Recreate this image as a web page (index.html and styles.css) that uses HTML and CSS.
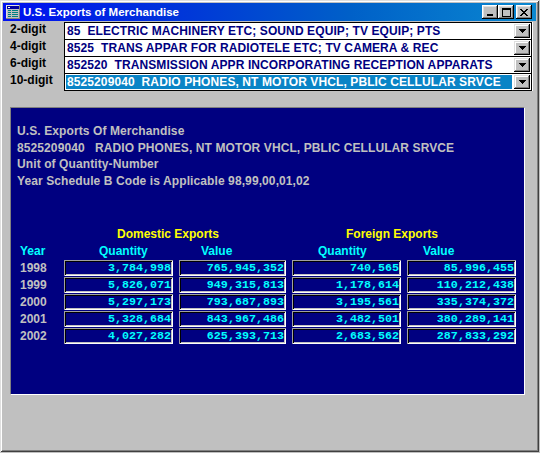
FILE: index.html
```html
<!DOCTYPE html>
<html>
<head>
<meta charset="utf-8">
<title>U.S. Exports of Merchandise</title>
<link rel="stylesheet" href="styles.css">
</head>
<body>
<div class="window">
  <div class="titlebar">
    <svg class="app-icon" viewBox="0 0 16 16" shape-rendering="crispEdges">
      <rect x="1" y="1" width="14" height="14" fill="#808080"/>
      <rect x="1" y="1" width="13" height="13" fill="#dfdfdf"/>
      <rect x="2" y="2" width="12" height="12" fill="#c0c0c0"/>
      <rect x="2" y="2" width="12" height="3" fill="#0000a0"/>
      <rect x="3" y="3" width="2" height="1" fill="#ffffff"/>
      <rect x="3" y="6" width="3" height="1" fill="#008080"/>
      <rect x="7" y="6" width="6" height="1" fill="#008080"/>
      <rect x="3" y="8" width="3" height="1" fill="#008080"/>
      <rect x="7" y="8" width="6" height="1" fill="#008080"/>
      <rect x="3" y="10" width="3" height="1" fill="#008080"/>
      <rect x="7" y="10" width="6" height="1" fill="#008080"/>
      <rect x="3" y="12" width="3" height="1" fill="#008080"/>
      <rect x="7" y="12" width="6" height="1" fill="#008080"/>
    </svg>
    <span class="title">U.S. Exports of Merchandise</span>
    <div class="controls">
      <span class="ctl">
        <svg width="8" height="7" shape-rendering="crispEdges"><rect x="1" y="5" width="6" height="2" fill="#000"/></svg>
      </span>
      <span class="ctl">
        <svg width="9" height="9" shape-rendering="crispEdges" fill="#000">
          <rect x="0" y="0" width="9" height="2"/><rect x="0" y="0" width="1" height="9"/>
          <rect x="8" y="0" width="1" height="9"/><rect x="0" y="8" width="9" height="1"/>
        </svg>
      </span>
      <span class="ctl ctl-close">
        <svg width="8" height="7" shape-rendering="crispEdges" fill="#000">
          <rect x="0" y="0" width="2" height="1"/><rect x="6" y="0" width="2" height="1"/>
          <rect x="1" y="1" width="2" height="1"/><rect x="5" y="1" width="2" height="1"/>
          <rect x="2" y="2" width="4" height="1"/>
          <rect x="3" y="3" width="2" height="1"/>
          <rect x="2" y="4" width="4" height="1"/>
          <rect x="1" y="5" width="2" height="1"/><rect x="5" y="5" width="2" height="1"/>
          <rect x="0" y="6" width="2" height="1"/><rect x="6" y="6" width="2" height="1"/>
        </svg>
      </span>
    </div>
  </div>

  <div class="selectors">
    <div class="sel-row">
      <span class="sel-label">2-digit</span>
      <div class="combo"><span class="combo-text">85  ELECTRIC MACHINERY ETC; SOUND EQUIP; TV EQUIP; PTS</span><span class="combo-btn"><svg width="7" height="4" shape-rendering="crispEdges" fill="#000"><rect x="0" y="0" width="7" height="1"/><rect x="1" y="1" width="5" height="1"/><rect x="2" y="2" width="3" height="1"/><rect x="3" y="3" width="1" height="1"/></svg></span></div>
    </div>
    <div class="sel-row">
      <span class="sel-label">4-digit</span>
      <div class="combo"><span class="combo-text">8525  TRANS APPAR FOR RADIOTELE ETC; TV CAMERA &amp; REC</span><span class="combo-btn"><svg width="7" height="4" shape-rendering="crispEdges" fill="#000"><rect x="0" y="0" width="7" height="1"/><rect x="1" y="1" width="5" height="1"/><rect x="2" y="2" width="3" height="1"/><rect x="3" y="3" width="1" height="1"/></svg></span></div>
    </div>
    <div class="sel-row">
      <span class="sel-label">6-digit</span>
      <div class="combo"><span class="combo-text">852520  TRANSMISSION APPR INCORPORATING RECEPTION APPARATS</span><span class="combo-btn"><svg width="7" height="4" shape-rendering="crispEdges" fill="#000"><rect x="0" y="0" width="7" height="1"/><rect x="1" y="1" width="5" height="1"/><rect x="2" y="2" width="3" height="1"/><rect x="3" y="3" width="1" height="1"/></svg></span></div>
    </div>
    <div class="sel-row">
      <span class="sel-label">10-digit</span>
      <div class="combo"><span class="combo-text selected">8525209040  RADIO PHONES, NT MOTOR VHCL, PBLIC CELLULAR SRVCE</span><span class="combo-btn"><svg width="7" height="4" shape-rendering="crispEdges" fill="#000"><rect x="0" y="0" width="7" height="1"/><rect x="1" y="1" width="5" height="1"/><rect x="2" y="2" width="3" height="1"/><rect x="3" y="3" width="1" height="1"/></svg></span></div>
    </div>
  </div>

  <div class="panel">
    <div class="info">
      <div class="info-line">U.S. Exports Of Merchandise</div>
      <div class="info-line">8525209040   RADIO PHONES, NT MOTOR VHCL, PBLIC CELLULAR SRVCE</div>
      <div class="info-line">Unit of Quantity-Number</div>
      <div class="info-line">Year Schedule B Code is Applicable 98,99,00,01,02</div>
    </div>

    <div class="grid">
      <div></div>
      <div class="group group-dom">Domestic Exports</div>
      <div class="group group-for">Foreign Exports</div>

      <div class="colhead">Year</div>
      <div class="colhead ch-dq">Quantity</div>
      <div class="colhead ch-dv">Value</div>
      <div class="colhead ch-fq">Quantity</div>
      <div class="colhead ch-fv">Value</div>

      <div class="year">1998</div>
      <div class="cell">3,784,998</div>
      <div class="cell">765,945,352</div>
      <div class="cell">740,565</div>
      <div class="cell">85,996,455</div>

      <div class="year">1999</div>
      <div class="cell">5,826,071</div>
      <div class="cell">949,315,813</div>
      <div class="cell">1,178,614</div>
      <div class="cell">110,212,438</div>

      <div class="year">2000</div>
      <div class="cell">5,297,173</div>
      <div class="cell">793,687,893</div>
      <div class="cell">3,195,561</div>
      <div class="cell">335,374,372</div>

      <div class="year">2001</div>
      <div class="cell">5,328,684</div>
      <div class="cell">843,967,486</div>
      <div class="cell">3,482,501</div>
      <div class="cell">380,289,141</div>

      <div class="year">2002</div>
      <div class="cell">4,027,282</div>
      <div class="cell">625,393,713</div>
      <div class="cell">2,683,562</div>
      <div class="cell">287,833,292</div>
    </div>
  </div>
</div>
</body>
</html>
```

FILE: styles.css
```css
html, body {
  margin: 0;
  background: #c0c0c0;
}

body {
  font-family: "Liberation Sans", Arial, sans-serif;
  font-weight: bold;
  font-size: 12px;
}

/* window frame */
.window {
  width: 539px;
  height: 452px;
  box-sizing: border-box;
  padding: 3px;
  background: #c0c0c0;
  box-shadow:
    inset 1px 1px #dfdfdf,
    inset -1px -1px #404040,
    inset 2px 2px #ffffff,
    inset -2px -2px #808080;
  display: flex;
  flex-direction: column;
}

/* caption bar */
.titlebar {
  height: 18px;
  flex: none;
  display: flex;
  align-items: center;
  padding: 0 4px 0 2px;
  background: linear-gradient(to right, #0010f0 0%, #0038d8 35%, #0060c8 65%, #0a88d0 100%);
  color: #ffffff;
  font-size: 11.5px;
}

.app-icon {
  width: 16px;
  height: 16px;
  flex: none;
}

.title {
  flex: 1;
  margin-left: 2px;
  white-space: nowrap;
}

.controls {
  display: flex;
}

.ctl {
  width: 16px;
  height: 14px;
  box-sizing: border-box;
  background: #c0c0c0;
  box-shadow:
    inset -1px -1px #000000,
    inset 1px 1px #ffffff,
    inset -2px -2px #808080,
    inset 2px 2px #dfdfdf;
  display: flex;
  align-items: center;
  justify-content: center;
}

.ctl svg {
  display: block;
}

.ctl-close {
  margin-left: 2px;
}

/* code selectors */
.selectors {
  margin-top: 1px;
  padding-left: 7px;
  display: flex;
  flex-direction: column;
  flex: none;
}

.sel-row {
  display: flex;
  height: 18px;
  margin-bottom: -1px;
}

.sel-label {
  width: 54px;
  flex: none;
  line-height: 14px;
  color: #000000;
}

.combo {
  width: 468px;
  height: 18px;
  box-sizing: border-box;
  border: 1px solid #000000;
  background: #ffffff;
  display: flex;
  box-shadow: 1px 0 #ffffff;
}

.combo-text {
  flex: 1;
  margin: 1px;
  padding-left: 1px;
  line-height: 14px;
  white-space: pre;
  letter-spacing: 0.1px;
  color: #000080;
  overflow: hidden;
}

.combo-text.selected {
  background: #0a84c6;
  color: #ffffff;
}

.combo-btn {
  width: 16px;
  height: 14px;
  margin: 1px;
  flex: none;
  box-sizing: border-box;
  background: #c0c0c0;
  box-shadow:
    inset -1px -1px #000000,
    inset 1px 1px #dfdfdf,
    inset -2px -2px #808080,
    inset 2px 2px #ffffff;
  display: flex;
  align-items: center;
  justify-content: center;
}

.combo-btn svg {
  display: block;
}

/* report panel */
.panel {
  margin: 17px 0 0 7px;
  width: 515px;
  height: 288px;
  flex: none;
  box-sizing: border-box;
  border-style: solid;
  border-width: 1px;
  border-color: #808080 #ffffff #ffffff #808080;
  background: #000080;
  padding: 15px 0 0 6px;
}

.info {
  color: #c0c0c0;
  line-height: 16.5px;
}

.info-line {
  white-space: pre;
  letter-spacing: 0.1px;
}

.grid {
  margin: 37px 0 0 3px;
  display: grid;
  grid-template-columns: 38px 109px 107px 109px 109px;
  grid-auto-rows: 16px;
  column-gap: 6px;
  row-gap: 1px;
  line-height: 16px;
}

.group {
  color: #ffff00;
  grid-column: span 2;
  white-space: nowrap;
}

.group-dom {
  padding-left: 53px;
}

.group-for {
  padding-left: 54px;
}

.colhead {
  color: #00ffff;
  white-space: nowrap;
}

.ch-dq { padding-left: 35px; }
.ch-dv { padding-left: 22px; }
.ch-fq { padding-left: 26px; }
.ch-fv { padding-left: 16px; }

.year {
  color: #c0c0c0;
}

.cell {
  box-sizing: border-box;
  height: 16px;
  padding-right: 2px;
  box-shadow:
    inset 1px 1px #a0a0a0,
    inset -1px -1px #ffffff,
    inset 2px 2px #000000,
    inset -2px -2px #c0c0c0;
  color: #00ffff;
  font-family: "Liberation Mono", "Courier New", monospace;
  font-size: 11.7px;
  text-align: right;
  line-height: 16px;
}
```
